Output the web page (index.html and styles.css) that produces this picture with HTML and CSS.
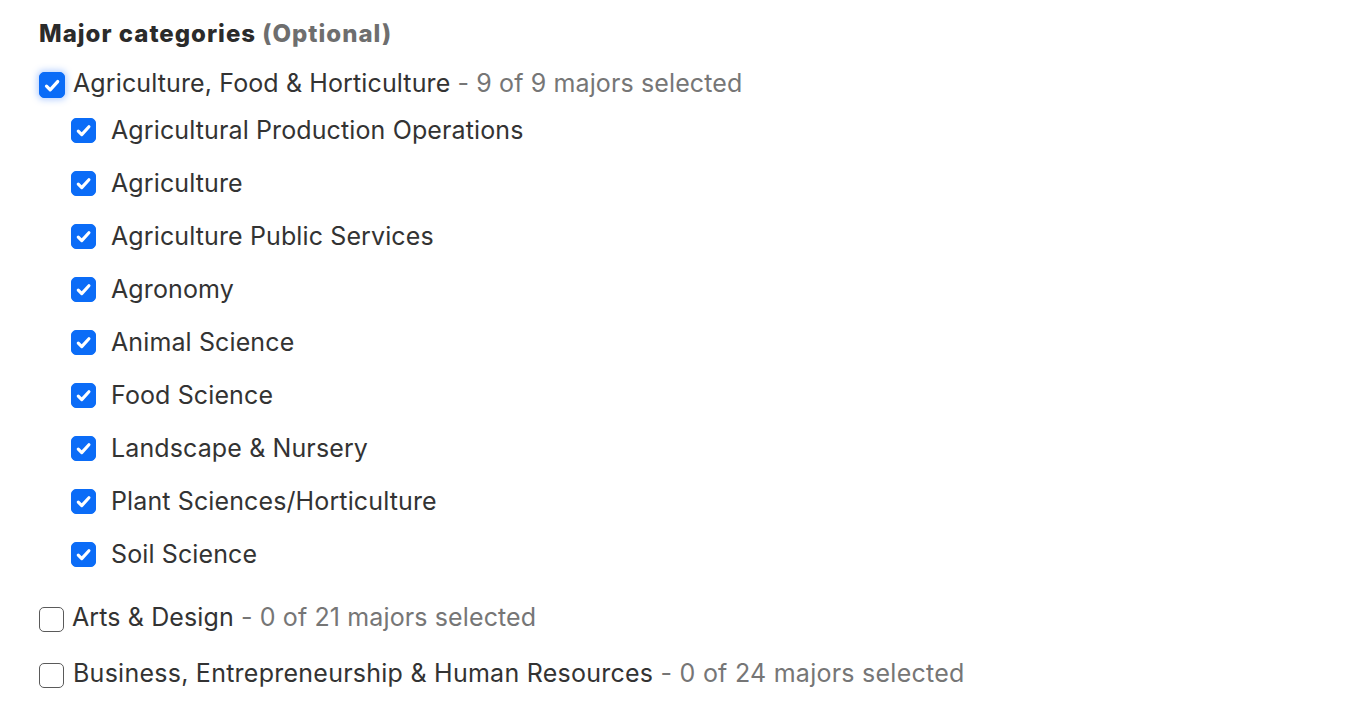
FILE: index.html
```html
<!DOCTYPE html>
<html lang="en">
<head>
<meta charset="utf-8">
<title>Major categories</title>
<link rel="stylesheet" href="styles.css">
</head>
<body>
<div class="panel">
  <h2 class="title">Major categories <span class="optional">(Optional)</span></h2>
  <ul class="categories">
    <li class="category">
      <label class="row row-top">
        <span class="box checked focused"><svg viewBox="0 0 25 25"><path d="M6.8 13.2l3.8 3.8 7.8-8.6"/></svg></span>
        <span class="name">Agriculture, Food &amp; Horticulture <span class="count">- 9 of 9 majors selected</span></span>
      </label>
      <ul class="majors">
        <li><label class="row row-sub"><span class="box checked"><svg viewBox="0 0 25 25"><path d="M6.8 13.2l3.8 3.8 7.8-8.6"/></svg></span><span class="name">Agricultural Production Operations</span></label></li>
        <li><label class="row row-sub"><span class="box checked"><svg viewBox="0 0 25 25"><path d="M6.8 13.2l3.8 3.8 7.8-8.6"/></svg></span><span class="name">Agriculture</span></label></li>
        <li><label class="row row-sub"><span class="box checked"><svg viewBox="0 0 25 25"><path d="M6.8 13.2l3.8 3.8 7.8-8.6"/></svg></span><span class="name">Agriculture Public Services</span></label></li>
        <li><label class="row row-sub"><span class="box checked"><svg viewBox="0 0 25 25"><path d="M6.8 13.2l3.8 3.8 7.8-8.6"/></svg></span><span class="name">Agronomy</span></label></li>
        <li><label class="row row-sub"><span class="box checked"><svg viewBox="0 0 25 25"><path d="M6.8 13.2l3.8 3.8 7.8-8.6"/></svg></span><span class="name">Animal Science</span></label></li>
        <li><label class="row row-sub"><span class="box checked"><svg viewBox="0 0 25 25"><path d="M6.8 13.2l3.8 3.8 7.8-8.6"/></svg></span><span class="name">Food Science</span></label></li>
        <li><label class="row row-sub"><span class="box checked"><svg viewBox="0 0 25 25"><path d="M6.8 13.2l3.8 3.8 7.8-8.6"/></svg></span><span class="name">Landscape &amp; Nursery</span></label></li>
        <li><label class="row row-sub"><span class="box checked"><svg viewBox="0 0 25 25"><path d="M6.8 13.2l3.8 3.8 7.8-8.6"/></svg></span><span class="name">Plant Sciences/Horticulture</span></label></li>
        <li><label class="row row-sub"><span class="box checked"><svg viewBox="0 0 25 25"><path d="M6.8 13.2l3.8 3.8 7.8-8.6"/></svg></span><span class="name">Soil Science</span></label></li>
      </ul>
    </li>
    <li class="category">
      <label class="row row-top">
        <span class="box"></span>
        <span class="name">Arts &amp; Design <span class="count">- 0 of 21 majors selected</span></span>
      </label>
    </li>
    <li class="category">
      <label class="row row-top">
        <span class="box"></span>
        <span class="name name-wide">Business, Entrepreneurship &amp; Human Resources <span class="count">- 0 of 24 majors selected</span></span>
      </label>
    </li>
  </ul>
</div>
</body>
</html>
```
FILE: styles.css
```css
html, body {
  margin: 0;
  padding: 0;
  background: #ffffff;
}
body {
  font-family: Inter, "Noto Sans", "Liberation Sans", sans-serif;
  color: #333333;
}
.panel {
  padding: 18px 0 0 39px;
}
.title {
  margin: 0;
  font-size: 24px;
  line-height: 32px;
  font-weight: 800;
  letter-spacing: 1px;
  color: #2b2b2b;
}
.optional {
  color: #6e6e6e;
}
.categories, .majors {
  list-style: none;
  margin: 0;
  padding: 0;
}
.categories {
  margin-top: 13px;
  display: flex;
  flex-direction: column;
  gap: 16px;
}
.majors {
  padding-left: 32px;
  margin-bottom: 1px;
}
.row {
  display: flex;
  align-items: center;
  font-size: 25px;
  letter-spacing: 0.12px;
  cursor: pointer;
}
.row-top {
  height: 40px;
  gap: 8px;
}
.row-sub {
  height: 53px;
  gap: 15px;
}
.box {
  flex: none;
  width: 25px;
  height: 25px;
  box-sizing: border-box;
  border-radius: 5px;
  border: 1.5px solid #5a5a5a;
  background: #ffffff;
  display: flex;
  align-items: center;
  justify-content: center;
  margin-top: 4px;
}
.row-sub .box {
  margin-top: 2px;
}
.box.checked {
  background: #0b6cf7;
  border-color: #0b6cf7;
}
.box.focused {
  width: 26px;
  height: 26px;
  box-shadow: 0 0 6px 2px rgba(60, 130, 255, 0.35);
}
.box svg {
  width: 25px;
  height: 25px;
}
.box svg path {
  fill: none;
  stroke: #ffffff;
  stroke-width: 3.4;
  stroke-linecap: round;
  stroke-linejoin: round;
}
.name {
  white-space: nowrap;
}
.name-wide {
  margin-left: 1px;
  letter-spacing: 0.25px;
}
.count {
  color: #767676;
}
```
